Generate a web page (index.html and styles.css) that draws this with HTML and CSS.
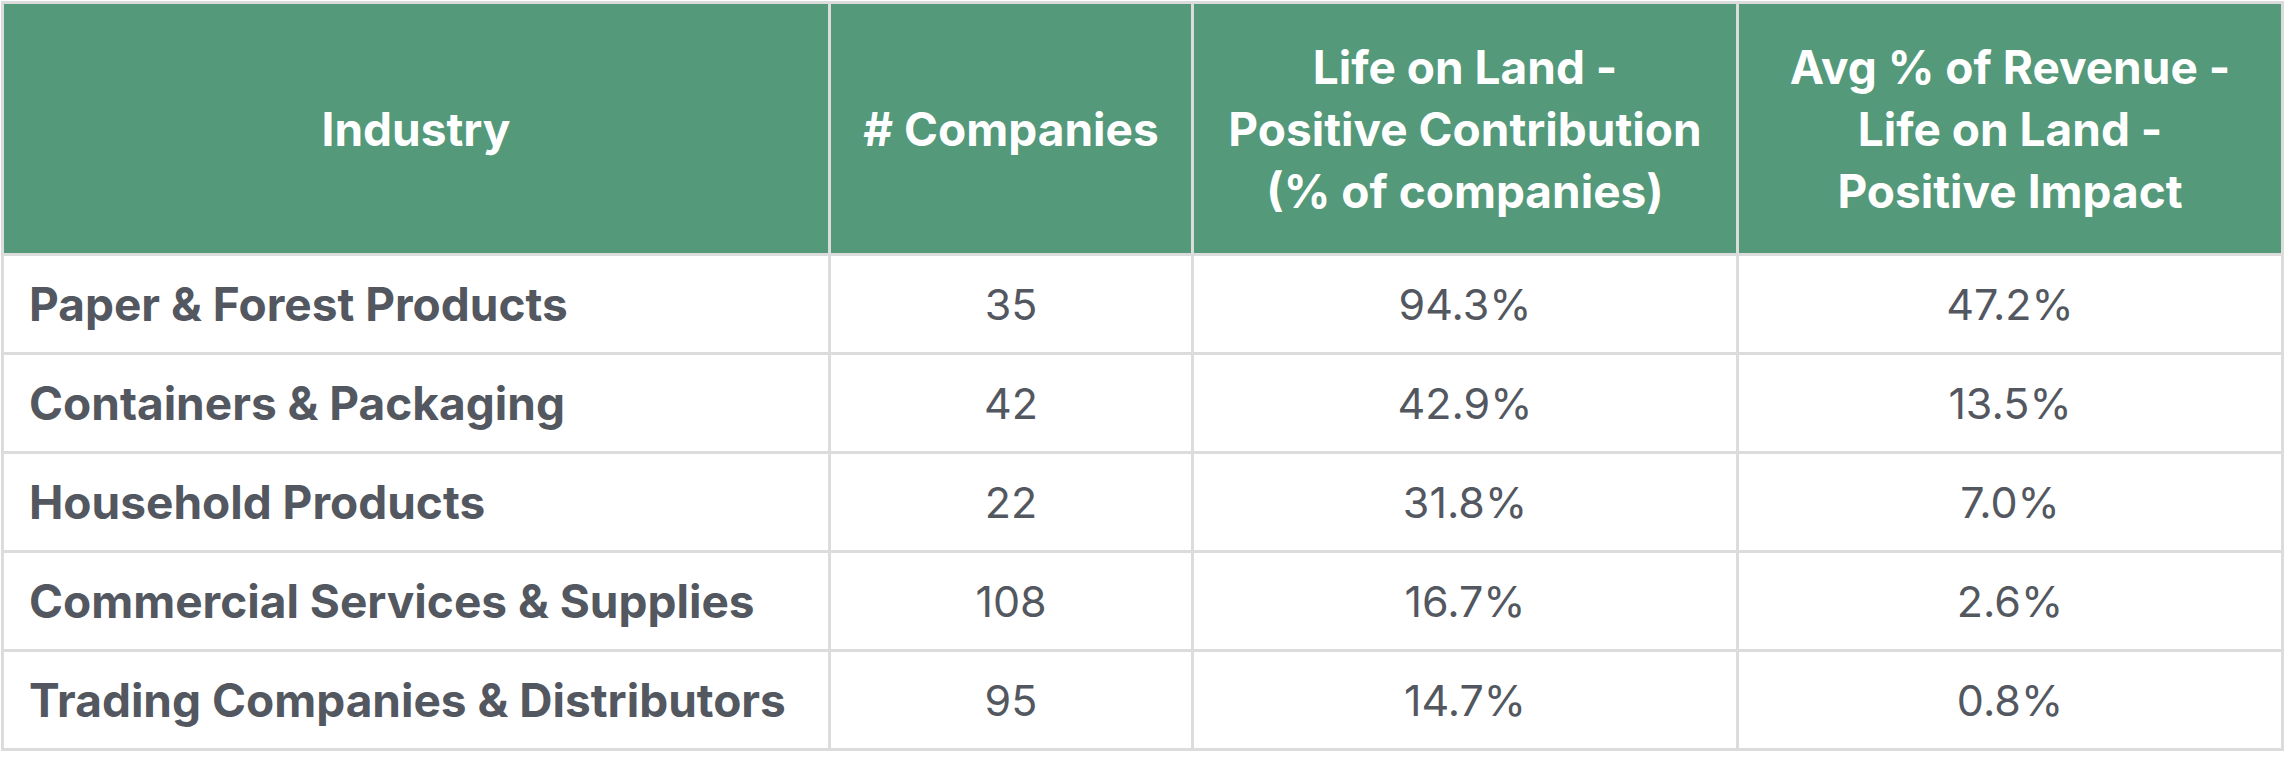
FILE: index.html
```html
<!DOCTYPE html>
<html lang="en">
<head>
<meta charset="utf-8">
<title>Life on Land - Industry table</title>
<link rel="stylesheet" href="styles.css">
</head>
<body>
<table class="data-table">
  <colgroup>
    <col class="col-industry">
    <col class="col-count">
    <col class="col-contrib">
    <col class="col-revenue">
  </colgroup>
  <thead>
    <tr class="head-row">
      <th>Industry</th>
      <th># Companies</th>
      <th>Life on Land -<br>Positive Contribution<br>(% of companies)</th>
      <th>Avg % of Revenue -<br>Life on Land -<br>Positive Impact</th>
    </tr>
  </thead>
  <tbody>
    <tr><td class="name">Paper &amp; Forest Products</td><td>35</td><td>94.3%</td><td>47.2%</td></tr>
    <tr><td class="name">Containers &amp; Packaging</td><td>42</td><td>42.9%</td><td>13.5%</td></tr>
    <tr><td class="name">Household Products</td><td>22</td><td>31.8%</td><td>7.0%</td></tr>
    <tr><td class="name">Commercial Services &amp; Supplies</td><td>108</td><td>16.7%</td><td>2.6%</td></tr>
    <tr><td class="name">Trading Companies &amp; Distributors</td><td>95</td><td>14.7%</td><td>0.8%</td></tr>
  </tbody>
</table>
</body>
</html>
```

FILE: styles.css
```css
html, body {
  margin: 0;
  padding: 0;
  background: #ffffff;
}

body {
  padding: 1px 0 0 1px;
  font-family: Inter, "Noto Sans", "Liberation Sans", sans-serif;
}

.data-table {
  border-collapse: collapse;
  table-layout: fixed;
  width: 2283px;
  border: 3px solid #dcdcdc;
}

.col-industry { width: 827px; }
.col-count { width: 363px; }
.col-contrib { width: 545px; }
.col-revenue { width: 545px; }

.data-table th,
.data-table td {
  border: 3px solid #dcdcdc;
  padding: 0;
  vertical-align: middle;
  text-align: center;
}

.head-row {
  height: 252px;
}

.data-table th {
  background: #53997a;
  color: #ffffff;
  font-weight: 700;
  font-size: 46px;
  line-height: 62px;
}

.data-table tbody tr {
  height: 99px;
}

.data-table td {
  color: #53575f;
  font-size: 43px;
  font-weight: 400;
}

.data-table td.name {
  text-align: left;
  padding-left: 25px;
  font-size: 46px;
  font-weight: 700;
}
```
